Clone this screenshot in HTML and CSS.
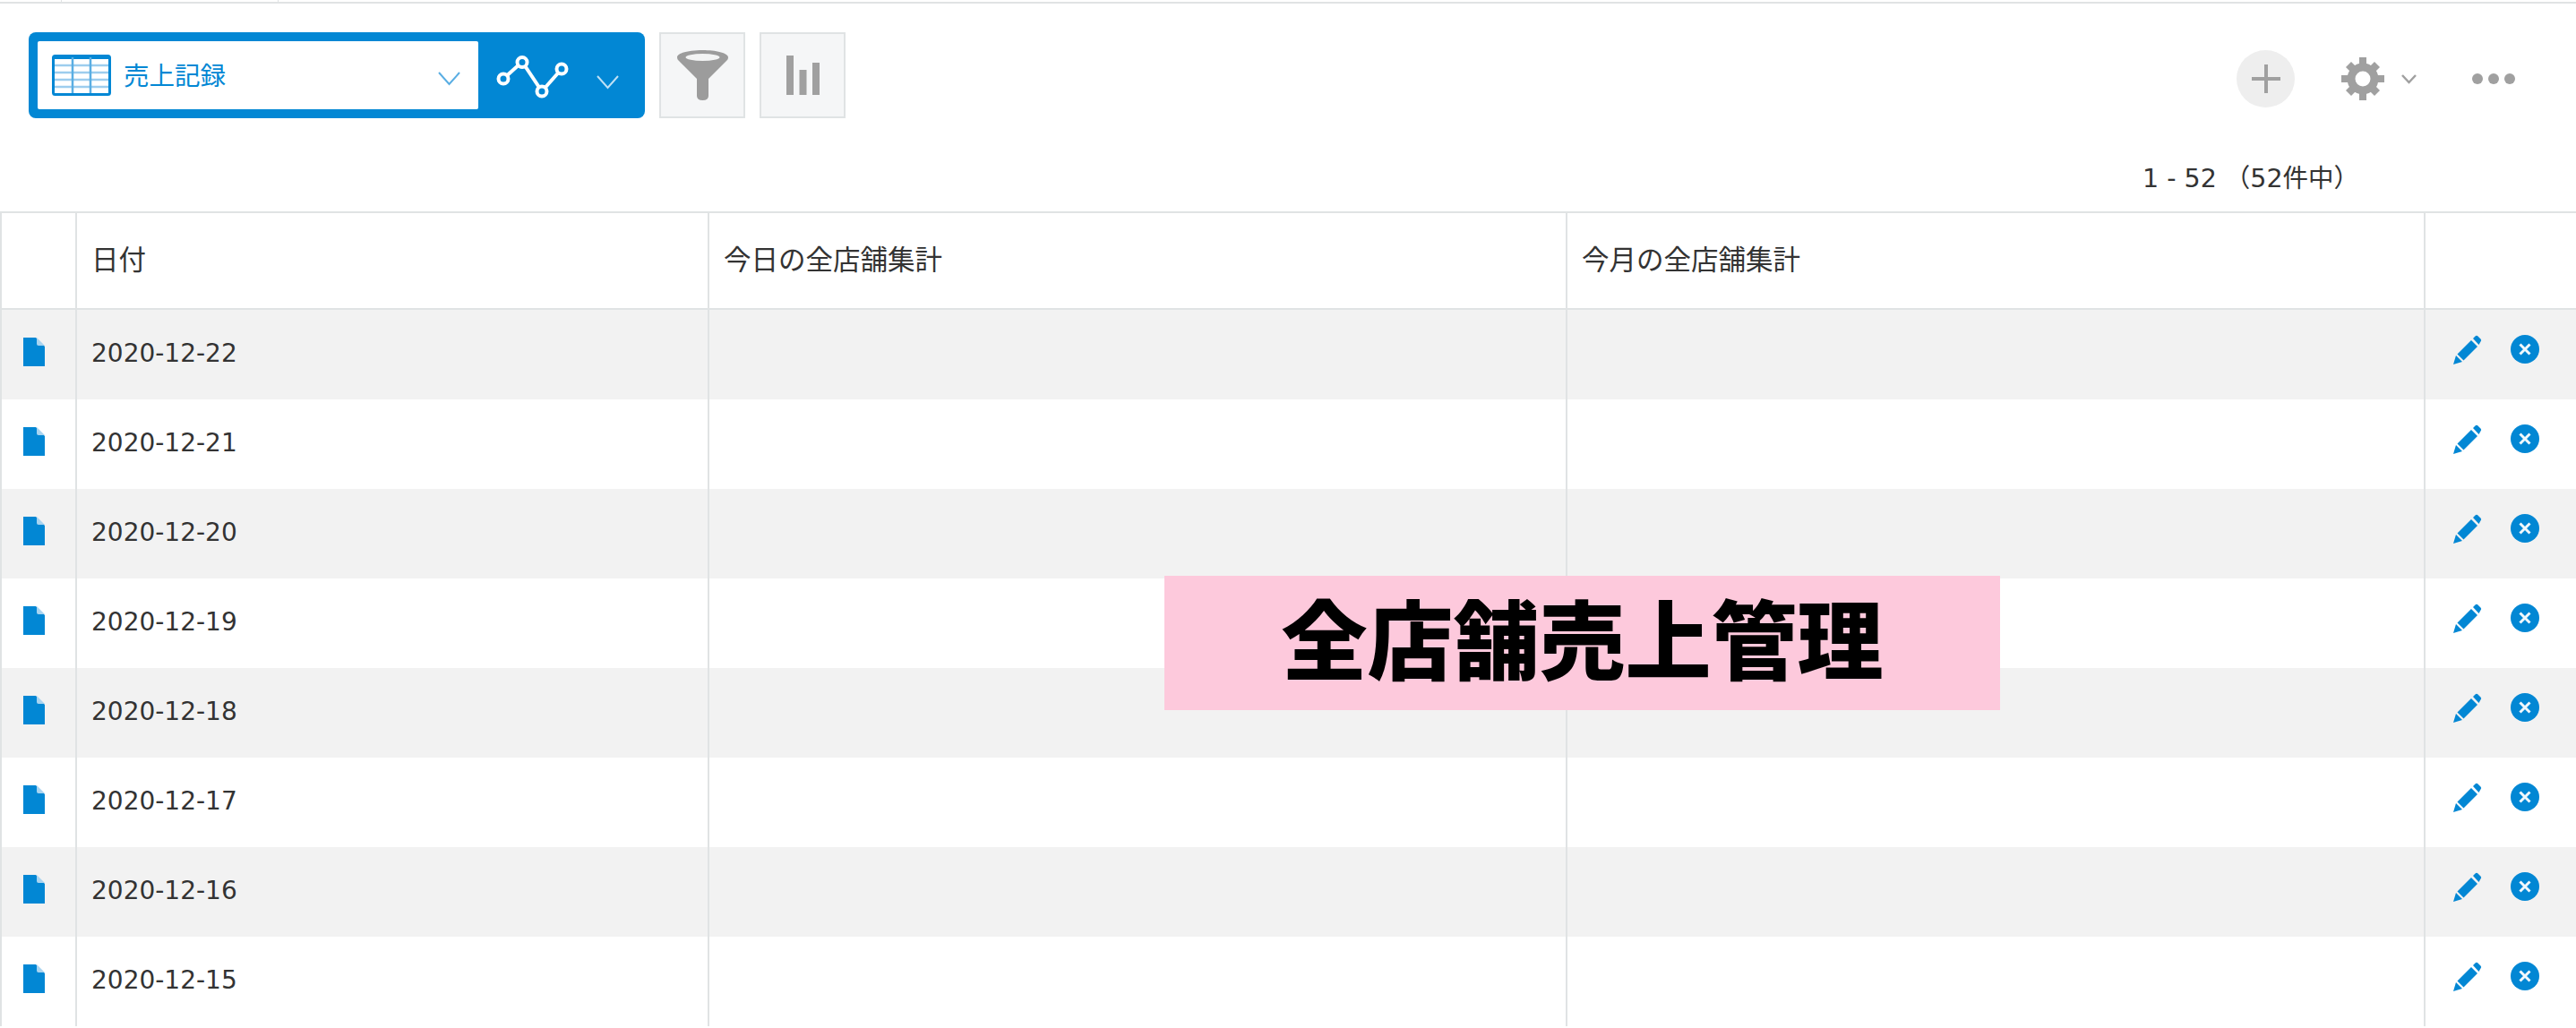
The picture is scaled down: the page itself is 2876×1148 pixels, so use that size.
FILE: index.html
```html
<!DOCTYPE html>
<html lang="ja">
<head>
<meta charset="utf-8">
<title>全店舗売上管理</title>
<link rel="stylesheet" href="styles.css">
</head>
<body>
<svg class="defs" width="0" height="0" aria-hidden="true">
  <symbol id="doc" viewBox="0 0 24 32">
    <path d="M0 0H14L24 10V32H0Z" fill="#0287d4"/>
    <path d="M15 0L24 9H17Q15 9 15 7Z" fill="#a9d4f0"/>
  </symbol>
  <symbol id="pen" viewBox="0 0 32 33">
    <path d="M0 33L3 23L10 30Z" fill="#0287d4"/>
    <path d="M4.500 21.500L20 6L27 13L11.500 28.500Z" fill="#0287d4"/>
    <path d="M22 4L24.500 1.500Q26 0 27.500 1.500L30.500 4.500Q32 6 30.500 7.500L28.500 11Z" fill="#0287d4"/>
  </symbol>
  <symbol id="del" viewBox="0 0 32 32">
    <circle cx="16" cy="16" r="16" fill="#0287d4"/>
    <path d="M10.500 10.500L21.500 21.500M21.500 10.500L10.500 21.500" stroke="#f2f8fc" stroke-width="3" fill="none"/>
  </symbol>
</svg>

<div class="strip"><i class="tick tick-a"></i><i class="tick tick-b"></i></div>

<header class="toolbar">
  <div class="viewbar">
    <div class="viewselect">
      <svg class="ico-table" viewBox="0 0 66 46">
        <rect x="1.500" y="1.500" width="63" height="43" rx="2" fill="#fff" stroke="#0287d4" stroke-width="3"/>
        <path d="M0 5H66V3H0Z" fill="#0287d4"/>
        <path d="M3 12H63M3 20H63M3 28H63M3 36H63" stroke="#9dcdee" stroke-width="2.500"/>
        <path d="M23 3V43M43 3V43" stroke="#5aaee3" stroke-width="2.500"/>
      </svg>
      <span class="viewname">売上記録</span>
      <svg class="chev" viewBox="0 0 25 16"><path d="M1 1L12.500 14L24 1" fill="none" stroke="#5aaee3" stroke-width="2"/></svg>
    </div>
    <svg class="ico-chart" viewBox="0 0 81 48">
      <path d="M8 26L29 7L51 40L73 15" fill="none" stroke="#fff" stroke-width="4"/>
      <g fill="#0287d4" stroke="#fff" stroke-width="4">
        <circle cx="8" cy="26" r="5.500"/><circle cx="29" cy="7.500" r="5.500"/><circle cx="51" cy="40" r="5.500"/><circle cx="73" cy="15" r="5.500"/>
      </g>
    </svg>
    <svg class="chev chev-white" viewBox="0 0 25 16"><path d="M1 1L12.500 14L24 1" fill="none" stroke="#bfe0f5" stroke-width="2"/></svg>
  </div>
  <button class="toolbtn" type="button" aria-label="filter">
    <svg class="ico-funnel" viewBox="0 0 57 56">
      <path d="M0 8C0 3 14 0 28.500 0S57 3 57 8C57 10 56 11 55 12L35 32V51Q35 56 28.500 56T22 51V32L2 12C1 11 0 10 0 8Z" fill="#9c9c9c"/>
      <ellipse cx="28.500" cy="8" rx="19" ry="4" fill="#f3f4f4"/>
    </svg>
  </button>
  <button class="toolbtn" type="button" aria-label="graph">
    <svg class="ico-bars" viewBox="0 0 37 44"><path d="M0 0H8V44H0ZM14.500 16H22.500V44H14.500ZM29 8H37V44H29Z" fill="#a0a0a0"/></svg>
  </button>
  <div class="actions">
    <span class="addbtn"><svg class="ico-plus" viewBox="0 0 32 32"><path d="M14 0H18V14H32V18H18V32H14V18H0V14H14Z" fill="#a0a0a0"/></svg></span>
    <svg class="ico-gear" viewBox="0 0 48 48">
      <g fill="#a0a0a0">
        <path d="M20 0H28V9H20Z"/><path d="M20 39H28V48H20Z"/><path d="M0 20H9V28H0Z"/><path d="M39 20H48V28H39Z"/>
        <path d="M5 11L11 5L17 11L11 17Z"/><path d="M31 11L37 5L43 11L37 17Z"/><path d="M5 37L11 31L17 37L11 43Z"/><path d="M31 37L37 31L43 37L37 43Z"/>
      </g>
      <circle cx="24" cy="24" r="13" fill="#fff" stroke="#a0a0a0" stroke-width="9"/>
    </svg>
    <svg class="ico-caret" viewBox="0 0 17 11"><path d="M1 1L8.500 9L16 1" fill="none" stroke="#a0a0a0" stroke-width="2.500"/></svg>
    <svg class="ico-more" viewBox="0 0 48 12"><g fill="#a0a0a0"><circle cx="6" cy="6" r="6"/><circle cx="24" cy="6" r="6"/><circle cx="42" cy="6" r="6"/></g></svg>
  </div>
</header>

<div class="pager">1 - 52 （52件中）</div>

<main class="records">
  <div class="row head">
    <div class="cell"></div>
    <div class="cell">日付</div>
    <div class="cell">今日の全店舗集計</div>
    <div class="cell">今月の全店舗集計</div>
    <div class="cell"></div>
  </div>
  <div class="row"><div class="cell"><svg class="ico-doc"><use href="#doc"/></svg></div><div class="cell">2020-12-22</div><div class="cell"></div><div class="cell"></div><div class="cell ops"><svg class="ico-pen"><use href="#pen"/></svg><svg class="ico-del"><use href="#del"/></svg></div></div>
  <div class="row"><div class="cell"><svg class="ico-doc"><use href="#doc"/></svg></div><div class="cell">2020-12-21</div><div class="cell"></div><div class="cell"></div><div class="cell ops"><svg class="ico-pen"><use href="#pen"/></svg><svg class="ico-del"><use href="#del"/></svg></div></div>
  <div class="row"><div class="cell"><svg class="ico-doc"><use href="#doc"/></svg></div><div class="cell">2020-12-20</div><div class="cell"></div><div class="cell"></div><div class="cell ops"><svg class="ico-pen"><use href="#pen"/></svg><svg class="ico-del"><use href="#del"/></svg></div></div>
  <div class="row"><div class="cell"><svg class="ico-doc"><use href="#doc"/></svg></div><div class="cell">2020-12-19</div><div class="cell"></div><div class="cell"></div><div class="cell ops"><svg class="ico-pen"><use href="#pen"/></svg><svg class="ico-del"><use href="#del"/></svg></div></div>
  <div class="row"><div class="cell"><svg class="ico-doc"><use href="#doc"/></svg></div><div class="cell">2020-12-18</div><div class="cell"></div><div class="cell"></div><div class="cell ops"><svg class="ico-pen"><use href="#pen"/></svg><svg class="ico-del"><use href="#del"/></svg></div></div>
  <div class="row"><div class="cell"><svg class="ico-doc"><use href="#doc"/></svg></div><div class="cell">2020-12-17</div><div class="cell"></div><div class="cell"></div><div class="cell ops"><svg class="ico-pen"><use href="#pen"/></svg><svg class="ico-del"><use href="#del"/></svg></div></div>
  <div class="row"><div class="cell"><svg class="ico-doc"><use href="#doc"/></svg></div><div class="cell">2020-12-16</div><div class="cell"></div><div class="cell"></div><div class="cell ops"><svg class="ico-pen"><use href="#pen"/></svg><svg class="ico-del"><use href="#del"/></svg></div></div>
  <div class="row"><div class="cell"><svg class="ico-doc"><use href="#doc"/></svg></div><div class="cell">2020-12-15</div><div class="cell"></div><div class="cell"></div><div class="cell ops"><svg class="ico-pen"><use href="#pen"/></svg><svg class="ico-del"><use href="#del"/></svg></div></div>
</main>

<div class="banner">全店舗売上管理</div>
</body>
</html>
```
FILE: styles.css
```css
* { box-sizing: border-box; }
html, body { margin: 0; padding: 0; }
body {
  position: relative;
  width: 2876px;
  height: 1148px;
  overflow: hidden;
  background: #fff;
  color: #333;
  font-family: "DejaVu Sans", "Noto Sans CJK JP", sans-serif;
  font-size: 28px;
}
.defs { position: absolute; }

.strip {
  position: relative;
  height: 4px;
  border-bottom: 2px solid #e0e3e4;
}
.tick { position: absolute; top: 0; width: 1px; height: 2px; background: #e0e3e4; }
.tick-a { left: 68px; }
.tick-b { left: 310px; }

.toolbar {
  display: flex;
  align-items: flex-start;
  height: 128px;
  padding: 32px 0 0 32px;
}
.viewbar {
  display: flex;
  align-items: center;
  width: 688px;
  height: 96px;
  padding: 10px;
  background: #0287d4;
  border-radius: 8px;
}
.viewselect {
  display: flex;
  align-items: center;
  flex: none;
  width: 492px;
  height: 76px;
  padding-left: 16px;
  background: #fff;
  border-radius: 2px;
}
.ico-table { flex: none; width: 66px; height: 46px; margin-right: 14px; }
.viewname {
  margin-bottom: 3px;
  color: #0287d4;
  font-family: "Noto Sans CJK JP", sans-serif;
  font-size: 28.500px;
}
.chev { flex: none; width: 25px; height: 16px; margin-top: 8px; }
.viewselect .chev { margin-left: auto; margin-right: 20px; }
.ico-chart { flex: none; width: 81px; height: 48px; margin: 4px 32px 0 20px; }
.chev-white { margin-top: 16px; margin-left: -1px; }

.toolbtn {
  display: flex;
  align-items: center;
  justify-content: center;
  flex: none;
  width: 96px;
  height: 96px;
  margin-left: 16px;
  padding: 0;
  background: #f5f6f7;
  border: 2px solid #e0e3e4;
}
.ico-funnel { width: 57px; height: 56px; }
.ico-bars { width: 37px; height: 44px; }

.actions {
  display: flex;
  align-items: center;
  height: 64px;
  margin-left: auto;
  margin-top: 20px;
  padding-right: 68px;
}
.addbtn {
  display: flex;
  align-items: center;
  justify-content: center;
  width: 65px;
  height: 64px;
  background: #eee;
  border-radius: 50%;
}
.ico-plus { width: 32px; height: 32px; }
.ico-gear { width: 48px; height: 48px; margin-left: 52px; }
.ico-caret { width: 17px; height: 11px; margin-left: 19px; }
.ico-more { width: 48px; height: 12px; margin-left: 62px; }

.pager {
  height: 104px;
  padding: 48px 0 0 2392px;
  font-size: 28.500px;
  line-height: 40px;
  white-space: nowrap;
}

.records { border-top: 2px solid #e0e3e4; }
.row {
  display: grid;
  grid-template-columns: 84px 706px 958px 958px 170px;
  height: 100px;
}
.row:nth-child(even) { background: #f2f2f2; }
.cell {
  display: flex;
  align-items: center;
  padding-left: 16px;
  padding-bottom: 3px;
  border-left: 2px solid #e0e3e4;
  line-height: 40px;
  white-space: nowrap;
}
.row .cell:first-child { padding-left: 24px; padding-bottom: 0; }
.head {
  height: 108px;
  border-bottom: 2px solid #e0e3e4;
  background: #fff;
  font-family: "Noto Sans CJK JP", sans-serif;
  font-size: 30.500px;
}
.head .cell { padding-bottom: 6px; }

.ico-doc { display: block; flex: none; width: 24px; height: 32px; transform: translateY(-3px); }
.ops { padding-left: 31px; padding-bottom: 12px; }
.ico-pen { flex: none; width: 32px; height: 33px; }
.ico-del { flex: none; width: 32px; height: 32px; margin-left: 32px; }

.banner {
  height: 150px;
  position: absolute;
  left: 1300px;
  top: 643px;
  width: 933px;
  padding-bottom: 17px;
  display: flex;
  align-items: center;
  justify-content: center;
  background: #fdc9dc;
  color: #000;
  font-family: "Noto Sans CJK JP", sans-serif;
  font-weight: 900;
  font-size: 96px;
  line-height: 133px;
}
```
